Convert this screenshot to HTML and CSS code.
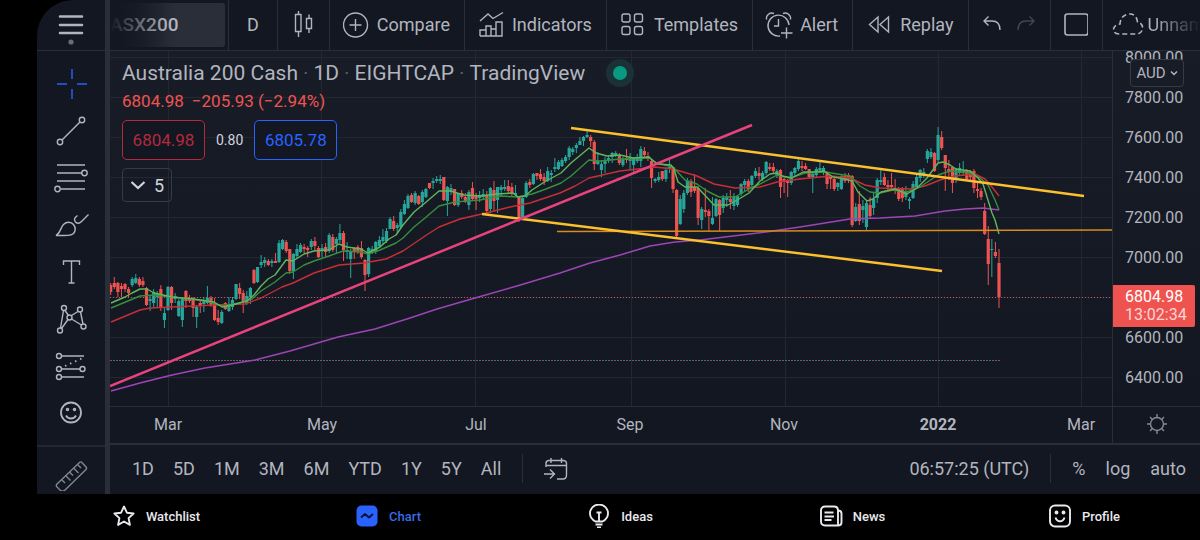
FILE: index.html
```html
<!DOCTYPE html>
<html lang="en">
<head>
    <meta charset="UTF-8">
    <meta name="viewport" content="width=device-width, initial-scale=1.0">
    <title>ASX200 - Chart</title>
    <link rel="stylesheet" href="styles.css">
</head>
<body>
    <div class="terminal">
        <div class="side">
            <button class="menu-btn" aria-label="Menu">
                <svg width="30" height="34" viewBox="0 0 30 34"><path d="M4 8.5h22M4 17h22M4 25h22" stroke-width="2.6" stroke-linecap="round"/><circle cx="15" cy="34" r="2.6" class="dot"/></svg>
            </button>
            <div class="tools">
                <button class="tool active" aria-label="Cross"><svg viewBox="0 0 36 36"><path d="M19 3v10M19 23v10M4 18h10M24 18h10"/></svg></button>
                <button class="tool" aria-label="Trend line"><svg viewBox="0 0 36 36"><circle cx="7" cy="29" r="2.700"/><circle cx="29" cy="7" r="2.700"/><path d="M9 27l18-18"/></svg></button>
                <button class="tool" aria-label="Fibonacci"><svg viewBox="0 0 36 36"><path d="M4 5h28M4 13h25M4 21h28M8 29h24"/><circle cx="31.500" cy="13" r="2.700"/><circle cx="4.500" cy="29" r="2.700"/></svg></button>
                <button class="tool" aria-label="Brush"><svg viewBox="0 0 36 36"><path d="M3 28.500c5-3 4.500-8 7.500-11 3-3 7.500-3 10 0s2 7 0 9c-4 3.500-11 1.500-17.500 2z"/><path d="M24.500 8.500c-3 2-4 4-2 6.500 2 2 4 1.500 6-.5l7-7"/></svg></button>
                <button class="tool" aria-label="Text"><svg viewBox="0 0 36 36"><path d="M10.500 11V7h16v4M18.500 7v22M15.500 29h6"/></svg></button>
                <button class="tool" aria-label="Patterns"><svg viewBox="0 0 36 36"><circle cx="11" cy="7" r="2.500"/><circle cx="27" cy="8.500" r="2.500"/><circle cx="16.500" cy="16.500" r="2.500"/><circle cx="7" cy="29.500" r="2.500"/><circle cx="30.500" cy="25.500" r="2.500"/><path d="M10.500 9.500L7.500 27M12 9.500l3.500 5M18.500 14.500l6.500-4M27.500 11l2.500 12M15 18.500l-6.500 9M18.500 18l10 6"/></svg></button>
                <button class="tool" aria-label="Prediction"><svg viewBox="0 0 36 36"><circle cx="6" cy="8" r="2.500"/><circle cx="6" cy="21" r="2.500"/><circle cx="29.500" cy="21" r="2.500"/><circle cx="6" cy="29" r="2.500"/><path d="M9 8h22M9 21h18M9 29h22"/><path d="M12 18l18-8" stroke-width="1.800" stroke-dasharray="1.500 4"/></svg></button>
                <button class="tool" aria-label="Icons"><svg viewBox="0 0 36 36"><circle cx="18" cy="17.500" r="10" stroke-width="1.800"/><path d="M13 20.500c2 4 8 4 10 0" stroke-width="1.800"/><circle cx="14.500" cy="14.500" r="1" stroke-width="1.500"/><circle cx="21.500" cy="14.500" r="1" stroke-width="1.500"/></svg></button>
            </div>
            <button class="measure" aria-label="Measure"><svg width="36" height="36" viewBox="0 0 36 36"><path d="M4 29L26.500 7.500c.8-.8 1.600-.8 2.400 0L33 12c.8.8.8 1.600 0 2.400L11 36l-3 0-4-4c-1-1-1-2 0-3zM9 25l3 3M13 21l4.500 4.500M17 17.500l3 3M21 13.500l4.500 4.500M25 10l3 3"/></svg></button>
        </div>

        <div class="main">
            <div class="topbar">
                <div class="symbol"><button>ASX200</button></div>
                <button class="item interval">D</button>
                <button class="item" aria-label="Chart type"><svg width="24" height="28" viewBox="0 0 24 28"><path d="M4.500 4.500h5.500v17H4.500zM7.500 1v3.500M7.500 21.500V27M15.500 8.500h5v10h-5zM18 4.500v4M18 18.500V23"/></svg></button>
                <button class="item"><svg width="26" height="28" viewBox="0 0 26 28"><circle cx="12.500" cy="15" r="12"/><path d="M12.500 9v12M6.500 15h12"/></svg>Compare</button>
                <button class="item"><svg width="26" height="28" viewBox="0 0 26 28"><path d="M2 26V20h6v6M8 26V16h5v10M13 26v-7h5M18 26V12h6v14H2M2 11l8-7 5 4.500L25 2.500"/></svg>Indicators</button>
                <button class="item"><svg width="26" height="28" viewBox="0 0 26 28"><rect x="2" y="4" width="8" height="8" rx="2"/><rect x="14.500" y="4" width="8" height="8" rx="2"/><rect x="2" y="16.500" width="8" height="8" rx="2"/><rect x="14.500" y="16.500" width="8" height="8" rx="2"/></svg>Templates</button>
                <button class="item"><svg class="alarm" width="26" height="28" viewBox="0 0 26 28"><path d="M14 26A10.500 10.500 0 1 1 23 15M12.500 9v7H8M20.500 17.500v11M15 23h11.500M.5 9.500A5.500 5.500 0 0 1 8 3.500M24.500 9.500A5.500 5.500 0 0 0 17 3.500"/></svg>Alert</button>
                <button class="item"><svg width="26" height="28" viewBox="0 0 26 28"><path d="M12 7v15L3.500 14.500zM22.500 7v15l-8.500-7.500z"/></svg>Replay</button>
                <div class="item history">
                    <button aria-label="Undo"><svg width="20" height="20" viewBox="0 0 20 20"><path d="M6.500 2.500L2 7l4.500 4.500M2 7h8c5 0 8 3 8 9"/></svg></button>
                    <button aria-label="Redo" disabled><svg width="20" height="20" viewBox="0 0 20 20"><path d="M13.500 2.500L18 7l-4.500 4.500M18 7h-8c-5 0-8 3-8 9"/></svg></button>
                </div>
                <button class="item" aria-label="Layout"><svg width="24" height="28" viewBox="0 0 24 28"><rect x="1" y="4" width="23" height="21" rx="2.500" stroke-width="1.600"/></svg></button>
                <button class="item layout-name"><svg width="32" height="28" viewBox="0 0 32 28"><path d="M7 24C-1 24 0 14.500 8 14 8.500 6 14 4 18 4c5 0 7 4 7.500 8 7 1 7 12-1.500 12z" stroke-dasharray="5 3" stroke-width="1.600"/></svg>Unnamed</button>
            </div>

            <div class="chart-grid">
                <div class="pane">
                    <svg id="chart" viewBox="110 51 1002 355" preserveAspectRatio="none"></svg>
                    <div class="legend">
                        <div class="title">Australia 200 Cash <i>·</i> 1D <i>·</i> EIGHTCAP <i>·</i> TradingView <span class="market-open"></span></div>
                        <div class="change"><span>6804.98</span><span>−205.93 (−2.94%)</span></div>
                        <div class="quotes">
                            <button class="sell">6804.98</button>
                            <span>0.80</span>
                            <button class="buy">6805.78</button>
                        </div>
                        <button class="collapse"><svg width="16" height="10" viewBox="0 0 16 10"><path d="M1.500 2L8 8l6.500-6" stroke-width="2.200"/></svg>5</button>
                    </div>
                </div>
                <div class="price-axis">
                    <ul>
                        <li>8000.00</li>
                        <li>7800.00</li>
                        <li>7600.00</li>
                        <li>7400.00</li>
                        <li>7200.00</li>
                        <li>7000.00</li>
                        <li>6800.00</li>
                        <li>6600.00</li>
                        <li>6400.00</li>
                    </ul>
                    <button class="currency">AUD<svg width="8" height="6" viewBox="0 0 8 6"><path d="M1 1.500L4 4.500l3-3" stroke-width="1.500"/></svg></button>
                    <div class="last-price">6804.98<span>13:02:34</span></div>
                </div>
                <div class="time-axis">
                    <div class="months">
                        <span>Mar</span><span>May</span><span>Jul</span><span>Sep</span><span>Nov</span><strong>2022</strong><span>Mar</span>
                    </div>
                </div>
                <button class="settings" aria-label="Chart settings"><svg width="22" height="22" viewBox="0 0 22 22"><circle cx="11" cy="11" r="6.500"/><path d="M11 1v3.500M11 17.500V21M1 11h3.500M17.500 11H21M4 4l2.400 2.400M15.600 15.600L18 18M18 4l-2.400 2.400M6.400 15.600L4 18"/></svg></button>
            </div>

            <div class="rangebar">
                <div class="ranges">
                    <button>1D</button>
                    <button>5D</button>
                    <button>1M</button>
                    <button>3M</button>
                    <button>6M</button>
                    <button>YTD</button>
                    <button>1Y</button>
                    <button>5Y</button>
                    <button>All</button>
                </div>
                <span class="sep"></span>
                <button aria-label="Go to date"><svg width="24" height="24" viewBox="0 0 24 24"><path d="M2 10V6.500C2 4.500 3 3.500 5 3.500h14c2 0 3.500 1 3.500 3V18c0 2.500-1 4-3.500 4h-6M2 8.500h20.500M7 1v5M17.500 1v5M0 17h10M6 12.500l4.500 4.500L6 21.500"/></svg></button>
                <button class="clock">06:57:25 (UTC)</button>
                <span class="sep"></span>
                <div class="scale">
                    <button>%</button>
                    <button>log</button>
                    <button>auto</button>
                </div>
            </div>
        </div>
    </div>

    <nav class="tabs">
        <a href="#watchlist"><svg width="24" height="24" viewBox="0 0 24 24"><path d="M12 2.500l2.900 6.200 6.700.8-5 4.600 1.300 6.800L12 17.500l-5.900 3.400 1.300-6.800-5-4.600 6.700-.8z" stroke-linejoin="round"/></svg>Watchlist</a>
        <a href="#chart" class="current"><svg width="24" height="24" viewBox="0 0 24 24"><rect x="1.500" y="1.500" width="21" height="21" rx="5" class="fill"/><path d="M6 13.500l4-3.500 4 3.500 4-3.500" class="wave"/></svg>Chart</a>
        <a href="#ideas"><svg width="24" height="24" viewBox="0 0 24 24"><path d="M8.500 17.500C4 15 3 12 3 9.500a9 9 0 0 1 18 0c0 2.500-1 5.500-5.500 8zM8.500 20.500h7M10 23.500h4M9.500 8.500h5M12 9v8"/></svg>Ideas</a>
        <a href="#news"><svg width="24" height="24" viewBox="0 0 24 24"><path d="M19 21.500H6c-2.500 0-4-1.500-4-4V6.500C2 4 3.500 2.500 6 2.500h9c2.500 0 4 1.500 4 4zM19 6.500c2 0 3.500 1 3.500 3v9c0 2-1 3-3.500 3M5.500 8.500h9M5.500 12.500h9.500M5.500 16h7"/></svg>News</a>
        <a href="#profile"><svg width="24" height="24" viewBox="0 0 24 24"><rect x="2" y="1.500" width="20" height="21" rx="5"/><path d="M7.500 13.500c1.500 5 7.500 5 9 0"/><circle cx="8.500" cy="8.500" r="1"/><circle cx="15.500" cy="8.500" r="1"/></svg>Profile</a>
    </nav>

    <script src="chart.js"></script>
</body>
</html>
```
FILE: styles.css
```css
* {
    box-sizing: border-box;
}
body {
    margin: 0;
    height: 100vh;
    display: flex;
    flex-direction: column;
    background-color: #000;
    color: #b2b5be;
    font-family: Roboto, "Liberation Sans", sans-serif;
    overflow: hidden;
}
button {
    background: none;
    border: 0;
    padding: 0;
    color: inherit;
    font: inherit;
    cursor: pointer;
}
svg {
    display: block;
    flex: none;
    fill: none;
    stroke: currentColor;
    stroke-width: 1.4;
}
.terminal {
    flex: 1;
    min-height: 0;
    display: flex;
    margin-left: 37px;
    background-color: #131722;
    border-top-left-radius: 36px;
    overflow: hidden;
}

/* drawing tools */
.side {
    width: 73px;
    flex: none;
    display: flex;
    flex-direction: column;
    border-right: 5px solid #2a2e39;
}
.menu-btn {
    height: 51px;
    display: flex;
    justify-content: center;
    padding-top: 8px;
    border-bottom: 1px solid #2a2e39;
}
.menu-btn svg {
    overflow: visible;
}
.menu-btn .dot {
    fill: #6a6d78;
    stroke: none;
}
.tools {
    flex: 1;
    display: flex;
    flex-direction: column;
    padding-top: 9px;
}
.tool {
    height: 47px;
    display: flex;
    align-items: center;
    justify-content: center;
}
.tool svg {
    width: 36px;
    height: 36px;
}
.tool.active {
    color: #2962ff;
}
.measure {
    height: 49px;
    padding-top: 8px;
    display: flex;
    justify-content: center;
    border-top: 2px solid #2a2e39;
    opacity: 0.7;
}

/* top toolbar */
.main {
    flex: 1;
    min-width: 0;
    display: flex;
    flex-direction: column;
}
.topbar {
    height: 51px;
    flex: none;
    display: flex;
    overflow: hidden;
    border-bottom: 1px solid #2a2e39;
    font-size: 18px;
}
.symbol {
    flex: none;
    width: 119px;
    padding: 3px 3px 3px 0;
    border-right: 1px solid #2a2e39;
}
.symbol button {
    position: relative;
    width: 100%;
    height: 44px;
    padding-bottom: 2px;
    border-radius: 0 3px 3px 0;
    overflow: hidden;
    background: linear-gradient(90deg, #131722, #2a2e39 60%);
    text-align: left;
    font-size: 19px;
    font-weight: 500;
}
.symbol button::after {
    content: "";
    position: absolute;
    inset: 0 50% 0 0;
    background: linear-gradient(90deg, #131722, transparent);
}
.item {
    flex: none;
    display: flex;
    align-items: center;
    gap: 8px;
    padding: 0 14px 2px 13px;
    border-right: 1px solid #2a2e39;
}
.item.interval {
    padding: 0 18px 2px;
}
.item .alarm {
    overflow: visible;
}
.item.history {
    gap: 14px;
}
.history button:disabled {
    color: #434651;
}
.item.layout-name {
    padding: 0 0 2px 9px;
    gap: 4px;
    width: 98px;
    overflow: hidden;
    border-right: 0;
    mask-image: linear-gradient(90deg, #000 50%, transparent);
}

/* chart */
.chart-grid {
    flex: 1;
    min-height: 0;
    display: grid;
    grid-template-columns: 1fr 88px;
    grid-template-rows: 1fr 37px;
}
.pane {
    position: relative;
    min-height: 0;
    overflow: hidden;
    background: linear-gradient(#181c27, #131722);
}
#chart {
    width: 100%;
    height: 100%;
}
.legend {
    position: absolute;
    top: 9px;
    left: 12px;
}
.title {
    display: flex;
    align-items: center;
    gap: 5px;
    height: 26px;
    font-size: 21px;
    white-space: nowrap;
}
.title i {
    color: #5d606b;
    font-style: normal;
}
.market-open {
    width: 14px;
    height: 14px;
    margin-left: 23px;
    border-radius: 50%;
    background-color: #089981;
    box-shadow: 0 0 0 7px #1a3138;
}
.change {
    display: flex;
    gap: 8px;
    height: 30px;
    line-height: 30px;
    font-size: 17px;
    color: #ef5350;
}
.quotes {
    display: flex;
    align-items: center;
    gap: 11px;
    margin-top: 4px;
    font-size: 14px;
    color: #d1d4dc;
}
.quotes button {
    width: 83px;
    height: 40px;
    border: 1px solid;
    border-radius: 5px;
    background-color: #131722;
    font-size: 17px;
}
.sell {
    color: #b22a3c;
}
.buy {
    color: #2962ff;
}
.collapse {
    display: flex;
    align-items: center;
    justify-content: center;
    gap: 8px;
    width: 50px;
    height: 34px;
    margin-top: 8px;
    border: 1px solid #363a45;
    border-radius: 4px;
    font-size: 18px;
    color: #d1d4dc;
}
.price-axis {
    position: relative;
    min-height: 0;
    overflow: hidden;
    border-left: 1px solid #2a2e39;
    background: linear-gradient(#181c27, #131722);
}
.price-axis ul {
    list-style: none;
    margin: -13px 0 0;
    padding: 0 0 0 12px;
    font-size: 16px;
    line-height: 40px;
}
.currency {
    position: absolute;
    top: 8px;
    left: 17px;
    width: 54px;
    height: 28px;
    display: flex;
    align-items: center;
    justify-content: center;
    gap: 4px;
    border: 1px solid #363a45;
    border-radius: 4px;
    background-color: #181c27;
    font-size: 15px;
}
.last-price {
    position: absolute;
    top: 234px;
    left: 0;
    width: 82px;
    padding: 3px 0 3px 12px;
    border-radius: 0 2px 2px 0;
    background-color: #ef5350;
    color: #fff;
    font-size: 16px;
    line-height: 18px;
}
.last-price span {
    display: block;
    color: #fbd5d4;
}
.time-axis {
    min-width: 0;
    overflow: hidden;
    border-top: 1px solid #2a2e39;
}
/* the outer months reach past both ends of the axis */
.months {
    display: grid;
    grid-template-columns: repeat(6, 154fr) 132fr;
    margin: 0 -35px 0 -19px;
    text-align: center;
    font-size: 16px;
    line-height: 36px;
}
.settings {
    display: flex;
    align-items: center;
    justify-content: center;
    padding-bottom: 2px;
    border-top: 1px solid #2a2e39;
    border-left: 1px solid #2a2e39;
    color: #868993;
}

/* date ranges and scale */
.rangebar {
    height: 51px;
    flex: none;
    display: flex;
    align-items: center;
    padding: 0 14px 2px 22px;
    border-top: 2px solid #2a2e39;
    font-size: 18px;
}
.ranges,
.scale {
    display: flex;
    gap: 19px;
}
.sep {
    width: 1px;
    height: 29px;
    margin: 0 21px;
    background-color: #2a2e39;
}
.clock {
    margin-left: auto;
}
.scale {
    gap: 20px;
}

/* app tabs */
.tabs {
    height: 46px;
    flex: none;
    display: grid;
    grid-template-columns: repeat(5, 1fr);
    padding: 0 0 2px 40px;
    font-size: 13px;
    font-weight: 500;
}
.tabs a {
    display: flex;
    align-items: center;
    justify-content: center;
    gap: 10px;
    color: #e8e9ed;
    text-decoration: none;
}
.tabs svg {
    stroke-width: 1.9;
}
.tabs .current {
    color: #3a69e8;
}
.tabs .fill {
    fill: #2962ff;
    stroke: none;
}
.tabs .wave {
    stroke: #0a1433;
    stroke-linejoin: round;
}

/* chart drawing */
#chart * {
    vector-effect: non-scaling-stroke;
}
#chart .grid {
    stroke: #232732;
    stroke-width: 1;
}
#chart .up {
    fill: #26a69a;
    stroke: none;
}
#chart .down {
    fill: #ef5350;
    stroke: none;
}
#chart polyline {
    stroke-linejoin: round;
}
#chart .fast {
    stroke: #5fb85a;
}
#chart .mid {
    stroke: #388e3c;
}
#chart .slow {
    stroke: #c62f36;
}
#chart .long {
    stroke: #9c45b5;
    stroke-width: 1.5;
}
#chart .channel {
    stroke: #fbc02d;
    stroke-width: 2.5;
}
#chart .trend {
    stroke: #e8437d;
    stroke-width: 2.5;
}
#chart .support {
    stroke: #d98c1a;
    stroke-width: 1.5;
}
#chart .last {
    stroke: #c85056;
    stroke-width: 1;
    stroke-dasharray: 1 2;
}
#chart .prev-down {
    stroke: #a8434a;
    stroke-width: 1;
    stroke-dasharray: 2 4;
}
#chart .prev-up {
    stroke: #23807a;
    stroke-width: 1;
    stroke-dasharray: 2 4;
    stroke-dashoffset: 3;
}
```
FILE: chart.js
```js
// one bar per trading day: direction, high, body top, body bottom, low
const bars = `
d 283 285 292 295,d 277 283 287 289,d 282 283 292 297,d 283 286 289 297,d 283 284 289 292,d 287 289 293 297,
u 277 279 285 287,u 274 278 283 284,d 277 279 285 287,d 277 281 285 287,d 287 288 305 306,u 295 299 301 311,
u 289 292 303 308,u 291 294 297 307,d 285 289 307 311,u 307 313 320 328,u 286 287 310 311,d 286 287 303 310,
u 293 296 299 303,u 299 301 316 317,u 297 299 320 327,d 290 291 301 308,d 295 298 301 303,d 297 298 308 317,
u 306 307 317 328,d 300 303 306 313,u 297 300 304 312,u 286 298 303 304,d 296 298 305 307,d 298 303 320 321,
d 310 318 322 325,u 310 312 323 324,d 302 303 309 310,u 297 304 311 312,u 297 300 307 310,u 284 284 299 300,
d 283 288 294 299,d 290 293 301 313,u 291 296 303 305,u 287 288 297 304,d 269 270 283 284,u 267 267 282 283,
u 255 262 265 268,u 257 260 263 267,d 259 261 265 266,u 259 261 263 267,d 253 261 263 263,u 240 243 262 263,
u 239 240 249 250,d 240 242 251 253,d 249 249 271 274,u 253 254 271 279,u 244 249 256 259,u 243 245 252 253,
d 244 247 249 253,d 246 248 250 257,u 239 241 247 250,d 237 241 246 251,d 246 248 257 258,u 244 248 251 257,
d 243 247 252 257,u 233 235 251 253,d 234 237 250 252,u 237 239 244 253,u 224 233 240 243,d 231 233 250 261,
u 242 250 252 259,u 249 252 259 278,d 247 248 252 259,d 245 247 252 254,d 241 248 257 259,d 259 260 275 291,
u 247 248 274 277,u 246 249 251 254,u 241 242 252 254,u 236 240 246 248,u 229 237 241 245,u 228 231 241 243,
u 217 219 229 229,d 216 221 229 231,u 223 225 228 234,u 209 212 227 228,u 200 204 214 215,u 194 196 208 209,
d 193 195 202 203,u 191 193 203 205,d 195 196 204 205,u 190 192 202 207,u 188 189 197 198,d 183 183 188 189,
u 178 181 183 189,u 176 179 181 183,u 175 179 181 184,d 177 177 200 201,u 186 187 201 216,u 184 188 192 195,
d 189 189 205 206,u 193 193 205 207,d 190 193 197 199,d 193 197 202 203,u 190 192 205 210,d 182 188 199 201,
d 193 195 199 210,u 191 195 198 202,u 189 194 197 199,d 191 195 211 213,u 187 188 209 213,d 181 190 201 210,
u 187 187 200 213,u 185 187 190 197,u 180 187 189 191,d 180 186 191 193,d 183 187 194 196,u 185 193 195 197,
d 197 197 220 222,u 197 198 217 218,u 181 183 197 198,d 179 182 185 188,u 173 174 184 185,d 173 173 176 180,
d 169 174 179 181,d 173 177 181 185,u 167 171 181 182,u 170 173 175 182,u 158 167 169 172,u 160 162 169 170,
u 158 160 166 167,u 155 157 161 163,u 146 148 157 160,u 147 149 152 155,u 143 145 148 153,u 137 141 145 145,
u 136 137 141 146,u 131 135 137 138,d 135 137 141 147,d 140 142 164 170,u 152 161 164 165,u 160 164 170 177,
u 157 161 164 173,u 156 158 161 163,u 152 153 157 163,u 151 153 156 157,d 153 156 163 165,u 157 159 165 167,
d 149 158 160 163,u 153 158 161 170,u 157 158 165 172,u 154 157 161 163,u 146 149 161 167,d 147 151 155 157,
d 152 156 159 161,d 160 161 178 188,u 178 179 181 183,u 172 177 180 182,d 171 171 179 181,u 167 170 179 182,
u 160 167 169 173,d 167 167 189 193,d 189 190 236 237,u 195 199 224 225,u 190 193 209 213,u 178 181 193 195,
d 179 181 192 197,d 174 187 191 193,d 186 188 218 225,u 207 209 220 229,d 188 210 212 217,d 209 211 216 231,
u 197 218 224 225,u 198 199 216 217,d 199 200 215 231,u 195 198 208 213,u 193 197 200 207,d 190 199 202 209,
u 193 196 206 210,u 195 196 205 207,u 183 184 194 196,u 179 181 185 191,d 179 181 189 192,u 175 176 185 187,
u 168 171 176 178,d 167 173 176 180,u 171 173 179 181,u 161 162 173 175,d 163 167 169 171,d 163 167 171 173,
u 169 171 175 178,d 169 170 187 198,d 178 179 182 193,d 179 180 183 197,u 171 172 183 185,u 167 168 173 177,
u 159 161 169 171,d 161 166 168 171,d 163 166 169 170,d 169 169 177 179,u 173 174 177 193,u 167 169 175 177,
u 161 168 170 173,u 166 168 173 175,d 171 173 184 189,d 175 177 179 189,d 178 179 189 191,u 182 183 187 191,
u 175 176 189 190,d 173 176 181 183,d 173 175 179 183,d 175 176 225 227,u 203 207 221 222,d 191 204 221 225,
u 200 206 210 223,u 201 203 227 231,d 197 205 216 219,u 193 199 208 215,u 178 180 198 203,u 168 180 182 185,
d 173 177 185 186,d 180 185 187 191,d 173 185 187 190,d 179 189 191 194,d 187 188 199 201,d 187 189 198 202,
u 186 191 197 200,u 197 199 201 209,u 181 184 198 199,u 175 177 187 189,u 169 170 178 182,u 168 172 175 178,
u 149 151 159 163,u 148 152 157 159,d 152 153 171 172,u 127 135 160 162,d 131 137 148 150,d 155 155 168 191,
d 160 169 171 180,d 166 167 183 193,u 168 169 179 183,u 163 168 173 175,u 161 171 173 175,d 169 171 179 181,
d 170 171 177 180,d 169 171 188 193,d 183 189 191 198,d 188 191 197 200,d 203 211 234 235,d 226 239 264 285,
u 239 249 250 277,d 242 252 256 258,d 249 263 297 308`.trim().split(',');

// moving averages
const averages = {
    long: '111,391 140,383 172,375 205,368 230,364 255,360 290,351 338,337 375,329 410,318 437,309 475,298 517,286 560,273 590,263 620,255 650,246 675,242 700,240 733,236 766,232 800,227 825,223 850,219 880,218 915,216 945,211 965,209 983,208 999,210',
    slow: '111,322 140,310 150,308 172,307 214,305 245,304 261,298 282,287 293,283 314,273 339,265 364,263 386,259 403,251 425,236 439,227 460,219 486,213 510,207 530,203 560,193 575,186 589,178 620,171 655,167 673,169 697,176 714,184 735,188 760,187 777,182 800,179 830,176 850,178 865,185 880,188 910,189 925,186 940,180 955,176 975,174 985,179 992,187 999,196',
    mid: '111,308 140,296 154,295 172,297 207,301 222,306 239,303 252,299 261,291 275,282 286,273 293,272 304,265 314,261 329,256 343,251 361,252 368,254 380,250 396,243 403,238 414,227 425,218 439,206 455,202 480,200 500,196 518,197 532,194 546,189 561,183 571,176 589,160 600,161 620,159 649,158 657,163 673,167 685,180 697,184 707,191 719,197 735,197 749,189 760,184 777,175 790,178 805,173 825,172 850,176 860,186 870,192 880,193 893,190 907,192 920,187 938,175 950,171 970,173 980,178 988,185 995,200 999,210',
    fast: '111,303 125,297 132,293 140,289 147,289 154,293 172,297 193,299 207,301 214,302 222,307 232,305 247,301 254,295 261,286 268,279 275,275 286,260 293,261 304,254 314,251 329,250 339,244 347,247 361,249 368,253 380,247 389,239 396,235 403,225 414,212 425,203 439,191 450,191 464,195 480,196 497,194 513,193 518,197 525,196 532,190 546,181 561,173 571,163 589,148 596,153 607,156 620,155 633,158 649,157 657,164 671,165 674,169 678,182 685,187 697,187 700,190 714,205 728,205 739,199 749,193 760,181 770,174 777,173 782,176 792,178 803,172 813,172 824,171 833,177 845,179 852,181 858,192 867,201 873,199 881,192 895,189 907,194 917,188 927,178 938,163 943,162 950,165 956,169 970,171 978,178 983,184 992,213 995,220 999,234'
};

const line = (name, x1, y1, x2, y2) =>
    `<line class="${name}" x1="${x1}" y1="${y1}" x2="${x2}" y2="${y2}"/>`;

let out = '';

// grid
for (let y = 57.5; y < 400; y += 40) {
    out += line('grid', 110, y, 1112, y);
}
[168, 321, 475, 631, 785, 938, 1081].forEach(x => {
    out += line('grid', x + 0.5, 51, x + 0.5, 406);
});

out += line('last', 110, 297.5, 1112, 297.5);
out += line('prev-down', 110, 360.5, 1000, 360.5);
out += line('prev-up', 110, 360.5, 1000, 360.5);

// candles
const step = (999 - 110.7) / (bars.length - 1);
bars.forEach((bar, i) => {
    const [dir, high, top, bottom, low] = bar.trim().split(' ');
    const x = 110.7 + i * step;
    const name = dir === 'u' ? 'up' : 'down';
    out += `<rect class="${name}" x="${x - 0.5}" y="${high}" width="1" height="${low - high}"/>`;
    out += `<rect class="${name}" x="${x - 1.6}" y="${top}" width="3.2" height="${Math.max(bottom - top, 1)}"/>`;
});

Object.keys(averages).forEach(name => {
    out += `<polyline class="${name}" points="${averages[name]}"/>`;
});

// drawings
out += line('support', 557, 231.5, 1112, 230);
out += line('channel', 571, 128, 1084, 196);
out += line('channel', 482, 214, 942, 271);
out += line('trend', 110, 386, 752, 125);

document.getElementById('chart').innerHTML = out;
```
